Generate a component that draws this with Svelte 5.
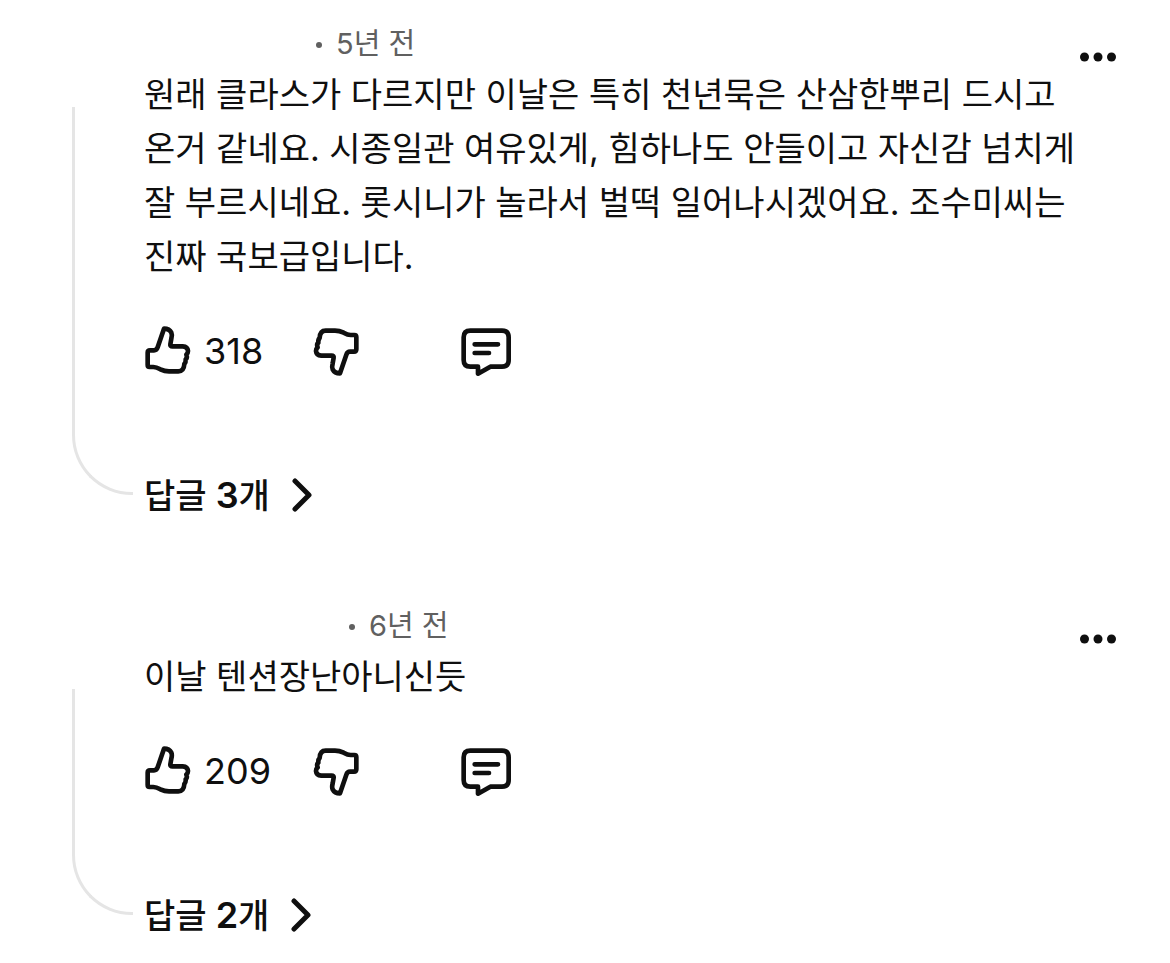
<script>
  const comments = [
    {
      id: 'c1',
      authorWidth: 172,
      age: '5년 전',
      text: '원래 클라스가 다르지만 이날은 특히 천년묵은 산삼한뿌리 드시고 온거 같네요. 시종일관 여유있게, 힘하나도 안들이고 자신감 넘치게 잘 부르시네요. 롯시니가 놀라서 벌떡 일어나시겠어요. 조수미씨는 진짜 국보급입니다.',
      likes: 318,
      replies: 3
    },
    {
      id: 'c2',
      authorWidth: 205,
      age: '6년 전',
      text: '이날 텐션장난아니신듯',
      likes: 209,
      replies: 2
    }
  ];
</script>

{#snippet thumb()}
  <path d="M60 121H72Q80 121 83 112L102 56Q118 56 124 68Q127 74 124 86L121 103Q120 109 127 109H158Q173 110 174 123Q174 130 169 134Q173 143 167 148Q168 157 163 162Q162 184 145 184H117Q104 184 91 178Q79 171 70 171H59Q53 171 53 165V128Q53 121 60 121Z" />
{/snippet}

<main>
  {#each comments as c (c.id)}
    <article>
      <div class="rail"></div>
      <div class="content">
        <div class="meta" style="padding-left: {c.authorWidth}px">
          <span class="dot"></span>
          <span>{c.age}</span>
        </div>
        <p>{c.text}</p>
        <div class="actions">
          <button class="like" aria-label="좋아요 {c.likes}">
            <svg width="48" height="54" viewBox="42 42 144 162">{@render thumb()}</svg>
            <span>{c.likes}</span>
          </button>
          <button class="dislike" aria-label="싫어요">
            <svg class="flipped" width="48" height="54" viewBox="42 42 144 162">{@render thumb()}</svg>
          </button>
          <button aria-label="답글 달기">
            <svg width="54" height="54" viewBox="57 42 162 162">
              <path d="M91 62H186Q206 62 206 82V150Q206 170 186 170H151L114 191V170H91Q71 170 71 150V82Q71 62 91 62Z" />
              <path d="M104 103H174M104 129H147" />
            </svg>
          </button>
        </div>
        <button class="replies">
          <span>답글 <b>{c.replies}</b>개</span>
          <svg width="20" height="34" viewBox="0 0 20 34">
            <path d="M3 3L17 17L3 31" />
          </svg>
        </button>
      </div>
      <button class="more" aria-label="더보기">
        <svg width="36" height="10" viewBox="0 0 36 10">
          <circle cx="4.5" cy="5" r="4.5" />
          <circle cx="18" cy="5" r="4.5" />
          <circle cx="31.5" cy="5" r="4.5" />
        </svg>
      </button>
    </article>
  {/each}
</main>

<style>
  :global(body) {
    background: #fff;
  }

  main {
    display: flex;
    flex-direction: column;
    gap: 84px;
    padding: 24px 54px 14px 72px;
    color: #0f0f0f;
    font-family: Inter, 'Noto Sans CJK KR', sans-serif;
    font-size: 34px;
  }

  article {
    display: grid;
    grid-template-columns: 61px minmax(0, 1fr) auto;
  }

  .rail {
    box-sizing: border-box;
    margin: 83px 0 27px;
    border: solid #e5e5e5;
    border-width: 0 0 3px 3px;
    border-bottom-left-radius: 60px;
  }

  .content {
    padding-left: 11px;
  }

  .meta {
    display: flex;
    align-items: center;
    gap: 14px;
    margin-bottom: 4px;
    color: #606060;
    font-size: 29px;
    line-height: 40px;
  }

  .dot {
    width: 6px;
    height: 6px;
    margin-top: 2px;
    border-radius: 50%;
    background: #606060;
  }

  p {
    margin: 0;
    line-height: 54px;
    word-break: keep-all;
  }

  button {
    display: flex;
    align-items: center;
    padding: 0;
    border: 0;
    background: none;
    color: inherit;
    font: inherit;
    cursor: pointer;
  }

  svg {
    display: block;
    flex: none;
    fill: none;
    stroke: #0f0f0f;
    stroke-width: 14;
    stroke-linecap: round;
    stroke-linejoin: round;
  }

  .actions {
    display: flex;
    margin-top: 40px;
  }

  .like {
    gap: 12px;
    width: 168px;
    font-size: 36px;
    line-height: 54px;
  }

  .dislike {
    width: 147px;
  }

  .flipped {
    transform: rotate(180deg);
  }

  .replies {
    gap: 22px;
    height: 54px;
    margin-top: 90px;
    font-weight: 500;
    line-height: 54px;
  }

  .replies b {
    font-size: 36px;
    font-weight: 600;
  }

  .replies svg {
    stroke-width: 5;
  }

  .more {
    align-self: start;
    padding: 28px 0;
  }

  .more svg {
    fill: #0f0f0f;
    stroke: none;
  }
</style>
